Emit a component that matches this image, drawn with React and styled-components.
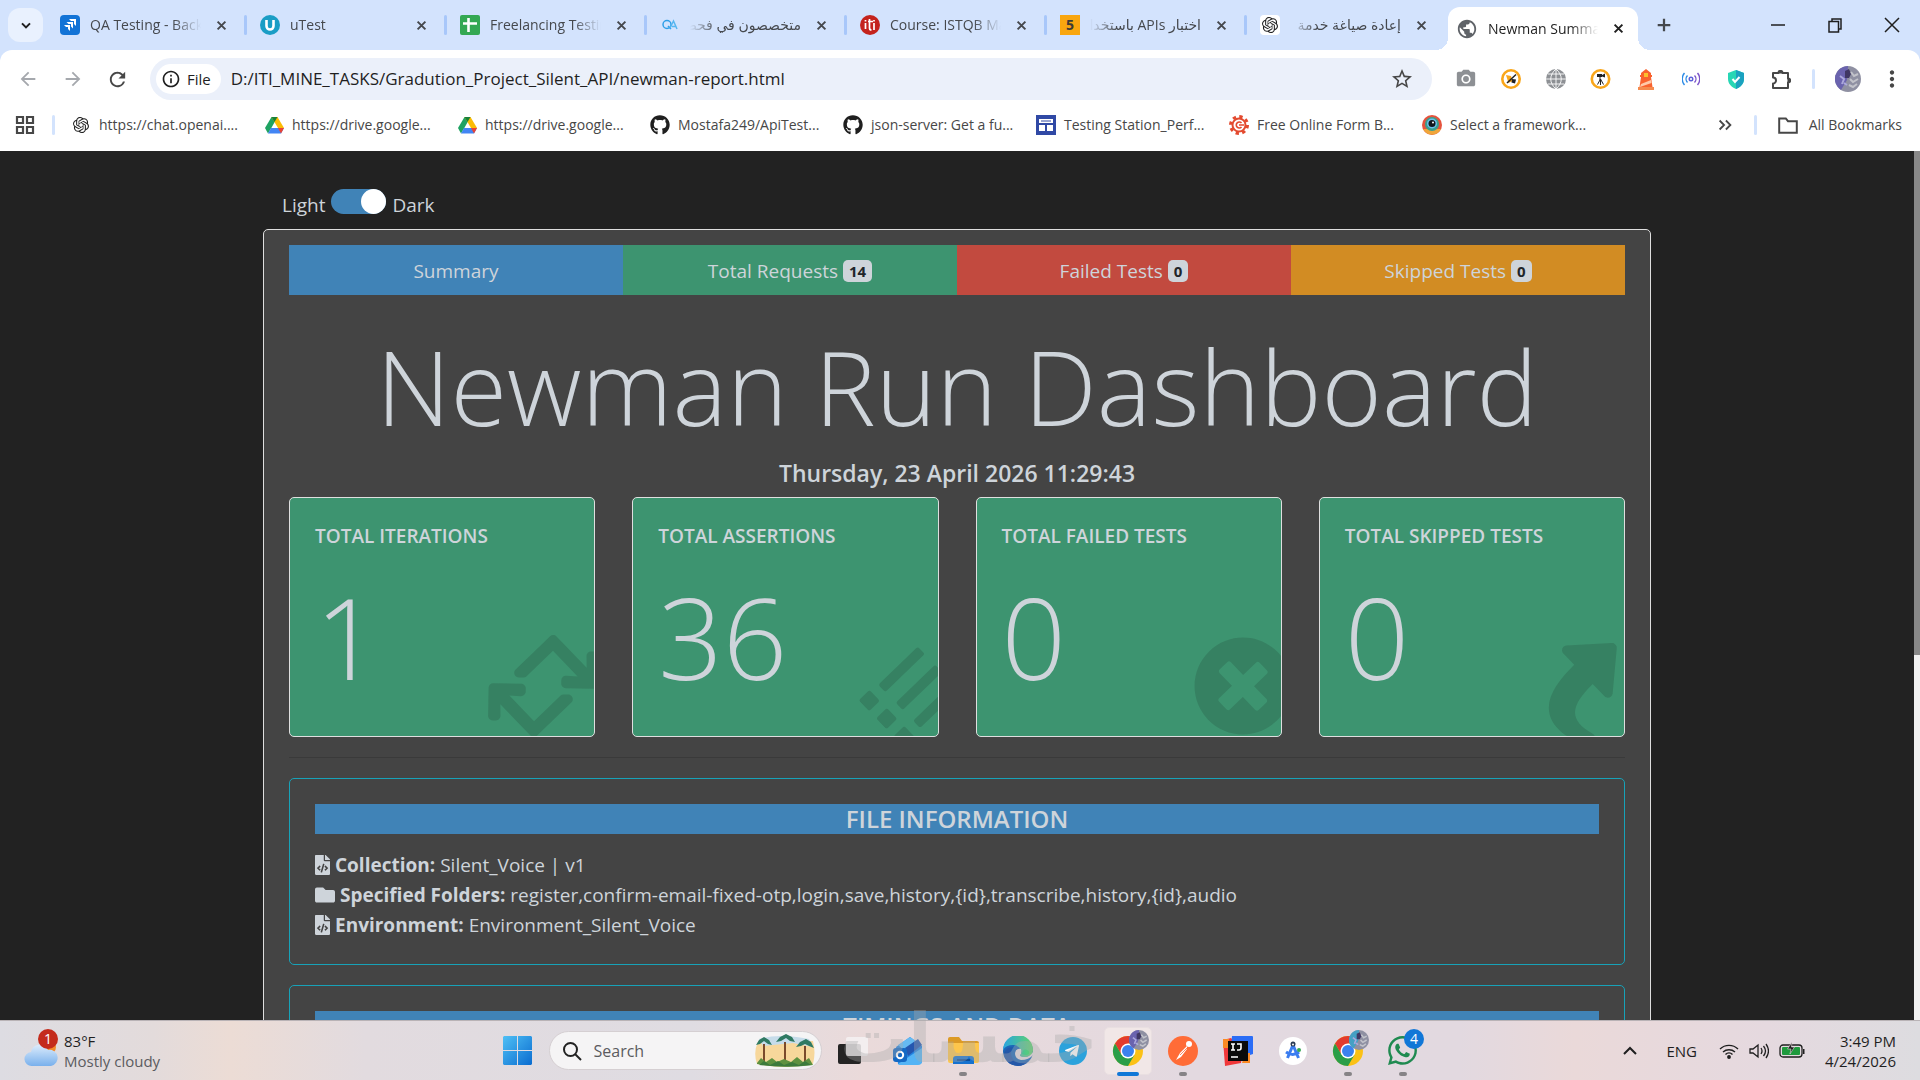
import React, { useState } from "react";
import styled, { createGlobalStyle } from "styled-components";
import {
  FaFileCode,
  FaFolder,
  FaGithub,
  FaList,
  FaPlusCircle,
  FaRetweet,
  FaShare,
  FaTelegramPlane,
  FaWhatsapp,
} from "react-icons/fa";
import { SiOpenai } from "react-icons/si";
import {
  MdArrowBack,
  MdArrowForward,
  MdCameraAlt,
  MdMoreVert,
  MdOutlineInfo,
  MdPublic,
  MdRefresh,
  MdStarBorder,
} from "react-icons/md";

const GlobalStyle = createGlobalStyle`
  * {
    box-sizing: border-box;
  }

  body {
    margin: 0;
    font-family: "Open Sans", "DejaVu Sans", sans-serif;
  }

  button {
    display: flex;
    align-items: center;
    justify-content: center;
    padding: 0;
    border: 0;
    background: none;
    color: inherit;
    font: inherit;
  }

  a {
    color: inherit;
    text-decoration: none;
  }

  svg {
    display: block;
    flex: none;
  }
`;

const Screen = styled.div`
  position: relative;
  display: flex;
  flex-direction: column;
  height: 100vh;
  overflow: hidden;
`;

/* ---------- browser ---------- */

const TabStrip = styled.div`
  display: flex;
  align-items: flex-end;
  height: 50px;
  flex: none;
  padding-left: 8px;
  background: #d3e3fd;
  color: #45484d;
`;

const TabSearch = styled.button`
  width: 35px;
  height: 34px;
  align-self: center;
  margin-right: 3px;
  border-radius: 12px;
  background: #e9f1fe;
  color: #1f1f1f;
`;

const Tab = styled.div`
  position: relative;
  display: flex;
  align-items: center;
  flex: 0 1 ${(props) => (props.$active ? "190px" : "200px")};
  min-width: 0;
  height: ${(props) => (props.$active ? "43px" : "50px")};
  margin: ${(props) => (props.$active ? "0 2px" : "0")};
  padding: ${(props) => (props.$active ? "0 13px 0 8px" : "0 18px 0 14px")};
  border-radius: 12px 12px 0 0;
  background: ${(props) => (props.$active ? "#fff" : "none")};
  color: ${(props) => (props.$active ? "#1f1f1f" : "#45484d")};

  &::before,
  &::after {
    content: "";
    display: ${(props) => (props.$active ? "block" : "none")};
    position: absolute;
    bottom: 0;
    width: 12px;
    height: 12px;
  }

  &::before {
    right: 100%;
    background: radial-gradient(circle at 0 0, transparent 12px, #fff 12px);
  }

  &::after {
    left: 100%;
    background: radial-gradient(circle at 100% 0, transparent 12px, #fff 12px);
  }
`;

const TabDivider = styled.span`
  width: 3px;
  height: 20px;
  margin: 0 -1px 15px -2px;
  border-radius: 2px;
  background: #a8c7fa;
`;

const TabTitle = styled.span`
  flex: 1;
  min-width: 0;
  margin: 0 14px 0 10px;
  overflow: hidden;
  white-space: nowrap;
  font-size: 14px;
  line-height: 24px;
  mask-image: linear-gradient(
    to ${(props) => (props.dir === "rtl" ? "left" : "right")},
    #000 75%,
    transparent
  );
`;

const NewTab = styled.button`
  width: 34px;
  height: 50px;
  margin-left: 7px;
`;

const WindowButtons = styled.div`
  display: flex;
  margin-left: auto;
  color: #1f1f1f;

  button {
    width: 57px;
    height: 50px;
  }
`;

const ToolbarArea = styled.div`
  flex: none;
  background: #d3e3fd;
`;

const Toolbar = styled.div`
  display: flex;
  align-items: center;
  padding: 8px 13px 0 5px;
  border-radius: 12px 12px 0 0;
  background: #fff;
  color: #474747;
`;

const ToolButton = styled.button`
  width: ${(props) => props.$width || 45}px;
  height: 40px;
  color: ${(props) => (props.$dim ? "#a5a8ad" : "inherit")};
`;

const Omnibox = styled.div`
  display: flex;
  align-items: center;
  flex: 1;
  height: 42px;
  margin: 0 11px 0 10px;
  padding: 0 18px 0 6px;
  border-radius: 21px;
  background: #ebf0fa;
`;

const FileChip = styled.button`
  gap: 6px;
  height: 30px;
  padding: 0 10px 0 5px;
  border-radius: 15px;
  background: #fff;
  color: #1f1f1f;
  font-size: 15px;
  font-weight: 500;
`;

const Address = styled.input`
  flex: 1;
  min-width: 0;
  margin-left: 10px;
  padding: 0;
  border: 0;
  outline: 0;
  background: none;
  color: #1f1f1f;
  font: 17px/24px "Open Sans", sans-serif;
`;

const Divider = styled.span`
  width: 3px;
  height: 20px;
  margin-left: ${(props) => props.$space || 0}px;
  border-radius: 2px;
  background: #d3e3fd;
`;

const Profile = styled.button`
  margin: 0 16px 0 20px;
`;

const Bookmarks = styled.nav`
  display: flex;
  align-items: center;
  height: 51px;
  padding: 0 18px 2px 12px;
  background: #fff;
  color: #474747;
  font-size: 14px;
  line-height: 22px;
`;

const BookmarkList = styled.div`
  display: flex;
  flex: 1;
  min-width: 0;
  margin-left: 16px;
  overflow: hidden;
`;

const Bookmark = styled.a`
  display: grid;
  grid-template-columns: 20px 1fr;
  align-items: center;
  gap: 8px;
  flex: 0 1 193px;
  min-width: 0;
  white-space: nowrap;

  svg {
    justify-self: center;
  }
`;

const AllBookmarks = styled.button`
  gap: 10px;
  margin-left: 20px;
`;

const Chevrons = styled.button`
  width: 24px;
  height: 24px;
  margin-right: 17px;
`;

/* ---------- report page ---------- */

const Viewport = styled.div`
  display: flex;
  flex: 1;
  min-height: 0;
  overflow: hidden;
  background: #222;
`;

const Page = styled.main`
  flex: 1;
  min-width: 0;
  padding-top: 37px;
  overflow: hidden;
  color: #ced4da;
  font-size: 19px;
  line-height: 30px;
`;

const ScrollTrack = styled.div`
  width: 6px;
  background: #f1f1f1;
`;

const ScrollThumb = styled.div`
  height: 58%;
  background: #888;
`;

const Container = styled.div`
  max-width: 1388px;
  margin: 0 auto;
`;

const ThemeSwitch = styled.label`
  display: flex;
  align-items: center;
  gap: 6px;
  height: 34px;
  margin-bottom: 7px;
  padding-left: 19px;
`;

const Switch = styled.input`
  appearance: none;
  display: flex;
  justify-content: ${(props) => (props.checked ? "flex-end" : "flex-start")};
  align-self: flex-start;
  width: 55px;
  height: 25px;
  margin: 1px 0 0;
  border-radius: 13px;
  background: #4083b7;

  &::before {
    content: "";
    width: 25px;
    height: 25px;
    border-radius: 50%;
    background: #fff;
  }
`;

const Report = styled.section`
  padding: 15px 25px;
  border: 1px solid #dfdfdf;
  border-radius: 5px;
  background: #444;
`;

const Pills = styled.nav`
  display: grid;
  grid-template-columns: repeat(4, 1fr);
`;

const Pill = styled.a`
  display: flex;
  align-items: center;
  justify-content: center;
  gap: 5px;
  height: 50px;
  padding-top: 2px;
  background: ${(props) => props.$color};
`;

const Badge = styled.span`
  padding: 0 6px;
  border-radius: 5px;
  background: #ced4da;
  color: #212529;
  font-size: 15px;
  font-weight: 700;
  line-height: 22px;
`;

const Title = styled.h1`
  margin: 25px 0 6px;
  font-size: 103px;
  font-weight: 300;
  line-height: 132px;
  text-align: center;
`;

const RunDate = styled.h5`
  margin: 0 0 9px;
  font-size: 23px;
  font-weight: 600;
  line-height: 30px;
  text-align: center;
`;

const Stats = styled.div`
  display: grid;
  grid-template-columns: repeat(4, 1fr);
  gap: 37px;
`;

const Stat = styled.article`
  position: relative;
  padding: 26px 25px 28px;
  border: 1px solid #dfdfdf;
  border-radius: 5px;
  background: #3d9470;
  overflow: hidden;
`;

const StatName = styled.h6`
  margin: 0 0 16px;
  font-size: 19px;
  font-weight: 600;
  line-height: 24px;
  text-transform: uppercase;
`;

const StatValue = styled.div`
  font-size: 113px;
  font-weight: 300;
  line-height: 144px;
`;

const StatIcon = styled.span`
  position: absolute;
  right: -12px;
  bottom: 0;
  color: rgba(20, 20, 20, 0.15);
  transform: rotate(-44deg);

  svg {
    width: ${(props) => props.$width}px;
    height: ${(props) => props.$height}px;
  }
`;

const Rule = styled.hr`
  margin: 20px 0;
  border: 0;
  border-top: 1px solid #3a3a3a;
`;

const Panel = styled.section`
  margin-bottom: 20px;
  padding: 25px 25px 24px;
  border: 1px solid #17a2b8;
  border-radius: 5px;
`;

const PanelTitle = styled.h5`
  margin: 0 0 16px;
  background: #4083b7;
  font-size: 24px;
  font-weight: 600;
  line-height: 30px;
  text-align: center;
  text-transform: uppercase;
`;

const Fact = styled.div`
  display: flex;
  align-items: center;
  gap: 5px;

  svg {
    width: ${(props) => props.$iconWidth}px;
    height: 20px;
  }
`;

/* ---------- taskbar ---------- */

const Taskbar = styled.footer`
  display: grid;
  grid-template-columns: 1fr auto 1fr;
  align-items: center;
  flex: none;
  height: 60px;
  border-top: 1px solid #b9b3b6;
  background: linear-gradient(
    90deg,
    #dddce2 0%,
    #e3dbdb 8%,
    #ecdcd5 12%,
    #e2dbdf 19%,
    #dfdce2 36%,
    #eadada 45%,
    #e3d9e0 62%,
    #e2d9e0 76%,
    #ead9d9 82%,
    #e5d9df 92%,
    #dddce0 100%
  );
  color: #1f1f1f;
  font-size: 15px;
  line-height: 20px;
`;

const Weather = styled.button`
  gap: 6px;
  justify-self: start;
  padding-left: 24px;
  text-align: left;
`;

const Muted = styled.div`
  color: #5b5b60;
`;

const Apps = styled.div`
  display: flex;
  align-items: center;
`;

const AppButton = styled.button`
  position: relative;
  width: 55px;
  height: 58px;

  &::after {
    content: "";
    display: ${(props) => (props.$state ? "block" : "none")};
    position: absolute;
    bottom: 4px;
    width: ${(props) => (props.$state === "active" ? 22 : 8)}px;
    height: 4px;
    border-radius: 2px;
    background: ${(props) => (props.$state === "active" ? "#1177d7" : "#868386")};
  }
`;

const ActiveFrame = styled.span`
  display: flex;
  align-items: center;
  justify-content: center;
  width: 48px;
  height: 48px;
  border: 1px solid #e9dfe1;
  border-radius: 5px;
  background: #f1e7e7;
`;

const SearchBox = styled.label`
  display: flex;
  align-items: center;
  width: 273px;
  height: 39px;
  margin: 0 4px;
  padding: 0 6px 0 12px;
  border: 1px solid #d5cfd2;
  border-radius: 20px;
  background: #f5f4f5;

  input {
    flex: 1;
    min-width: 0;
    margin-left: 12px;
    padding: 0;
    border: 0;
    outline: 0;
    background: none;
    font: 16px/24px "Open Sans", sans-serif;
  }

  input::placeholder {
    color: #5b5b5f;
  }
`;

const Tray = styled.div`
  display: flex;
  align-items: center;
  justify-self: end;
  gap: 10px;
  padding-right: 24px;
`;

const Language = styled.button`
  margin: 0 12px 0 16px;
`;

const Clock = styled.button`
  margin-left: 10px;
  text-align: right;
`;

const Watermark = styled.div`
  position: absolute;
  left: 50%;
  bottom: -6px;
  width: 240px;
  margin-left: -120px;
  color: rgba(170, 170, 170, 0.36);
  font: bold 68px/94px "DejaVu Sans", sans-serif;
  text-align: center;
  pointer-events: none;
`;

/* ---------- drawings ---------- */

const JiraIcon = () => (
  <svg width="20" height="20" viewBox="0 0 20 20">
    <rect width="20" height="20" rx="4" fill="#1273d6" />
    <path d="M9 4h7v7l-2-2V6h-3zM6.500 7h6.500v6.500l-2-2V9H8.500zM4 10h6v6l-2-2v-2H6z" fill="#fff" />
  </svg>
);

const UTestIcon = () => (
  <svg width="20" height="20" viewBox="0 0 20 20">
    <circle cx="10" cy="10" r="10" fill="#1a9dc5" />
    <path d="M6.500 5v6a3.500 3.500 0 0 0 7 0V5" fill="none" stroke="#fff" strokeWidth="2.600" />
  </svg>
);

const SheetsIcon = () => (
  <svg width="20" height="20" viewBox="0 0 20 20">
    <rect width="20" height="20" rx="2" fill="#34a853" />
    <path d="M3 8.500h14M8.500 3v14" stroke="#fff" strokeWidth="2.600" />
  </svg>
);

const QaIcon = () => (
  <svg width="20" height="20" viewBox="0 0 20 20" fill="none" strokeWidth="1.500">
    <circle cx="7" cy="9.500" r="4" stroke="#2f9fe8" />
    <path d="M8 11l3 3" stroke="#2f9fe8" />
    <path d="M10 13l3.500-7 3.500 8M12 11.500h4" stroke="#56b6f0" />
  </svg>
);

const ItiIcon = () => (
  <svg width="20" height="20" viewBox="0 0 20 20">
    <circle cx="10" cy="10" r="10" fill="#c4231d" />
    <path
      d="M5.500 8v6M5.500 5v1.500M8 6.500h5M9.500 4v9q0 2 2 2M14 8v7M14 5v1.500"
      fill="none"
      stroke="#fff"
      strokeWidth="1.700"
    />
  </svg>
);

const FiveIcon = () => (
  <svg width="20" height="20" viewBox="0 0 20 20">
    <rect width="20" height="20" fill="#f9a60f" />
    <text x="10" y="15" textAnchor="middle" fontSize="14" fontWeight="700" fill="#3b3a36">
      5
    </text>
  </svg>
);

const GptIcon = () => (
  <svg width="20" height="20" viewBox="0 0 20 20">
    <rect width="20" height="20" rx="4" fill="#fff" />
    <SiOpenai x="2" y="2" size="16" color="#222" />
  </svg>
);

const DriveIcon = () => (
  <svg width="19" height="18" viewBox="0 0 19 18">
    <path d="M6.500 1h6L6 12.500l-3 5L0 12z" fill="#1ea362" />
    <path d="M6.500 1h6l6.500 11h-6z" fill="#fbbc04" />
    <path d="M6.500 1h6l-3 5z" fill="#188038" />
    <path d="M3 17.500L6 12h13l-3 5.500z" fill="#4285f4" />
    <path d="M13 12h6l-3 5.500z" fill="#ea4335" />
  </svg>
);

const StationIcon = () => (
  <svg width="20" height="20" viewBox="0 0 20 20">
    <rect width="20" height="20" fill="#3049a5" />
    <path d="M3 4h14v4H3zM3 10h6v6H3zM11 10h6v6h-6z" fill="#fff" />
    <path d="M5 5.500h10v1H5z" fill="#3049a5" />
  </svg>
);

const FormIcon = () => (
  <svg width="20" height="20" viewBox="0 0 20 20" fill="none">
    <circle cx="10" cy="10" r="8.500" stroke="#e34a2f" strokeWidth="3" strokeDasharray="3.340 3.340" />
    <circle cx="10" cy="10" r="6.500" stroke="#e34a2f" strokeWidth="2" />
    <path d="M12.500 8a3 3 0 1 0 0 4M10 10h5" stroke="#e34a2f" strokeWidth="1.600" />
  </svg>
);

const EyeIcon = () => (
  <svg width="20" height="20" viewBox="0 0 20 20">
    <circle cx="10" cy="10" r="10" fill="#e5533d" />
    <path d="M1 14a10 10 0 0 0 18 0z" fill="#f0a63a" />
    <circle cx="10" cy="9" r="7" fill="#3a9e8d" />
    <circle cx="10" cy="8.500" r="5" fill="#6cc1ee" />
    <circle cx="10" cy="8.500" r="3.500" fill="#11161d" />
    <circle cx="11" cy="7.500" r="1" fill="#fff" />
  </svg>
);

const CursorBadge = () => (
  <svg width="20" height="20" viewBox="0 0 20 20">
    <circle cx="10" cy="10" r="8.700" fill="#fff" stroke="#f9a61a" strokeWidth="2.600" />
    <path d="M5 6l5 1 1.500 5-4 2z" fill="#f9a61a" />
    <path d="M15 5.500L6 14" stroke="#222" strokeWidth="1.500" />
    <path d="M11 10l4 .500-1 4-3.500-1z" fill="#222" />
  </svg>
);

const CameraBadge = () => (
  <svg width="21" height="20" viewBox="0 0 21 20">
    <circle cx="10.500" cy="10" r="8.700" fill="#fff" stroke="#f9a61a" strokeWidth="2.600" />
    <path d="M7 5h5v3H7zM12 6l3-1.500v4L12 7.500z" fill="#222" />
    <path d="M10 8v3M10.500 10l-3 5.500M10.500 10v6M10.500 10l3 5.500" stroke="#222" />
  </svg>
);

const GridGlobe = () => (
  <svg width="20" height="20" viewBox="0 0 20 20">
    <circle cx="10" cy="10" r="10" fill="#8d9094" />
    <path
      d="M0 10h20M2 5h16M2 15h16M10 0v20M10 0c-7 6-7 14 0 20M10 0c7 6 7 14 0 20"
      fill="none"
      stroke="#fff"
      strokeWidth=".900"
    />
  </svg>
);

const Lighthouse = () => (
  <svg width="18" height="21" viewBox="0 0 18 21">
    <path d="M9 0l5 4v2h1v2h-1l1.500 10h-13L4 8H3V6h1V4z" fill="#f9622e" />
    <path d="M7 4h4v4H7z" fill="#fbc02d" />
    <path d="M4 15l10-4 .500 3L3 18z" fill="#ffc9a8" />
    <path d="M1 18h16v3H1z" fill="#f58b4e" />
  </svg>
);

const SignalIcon = () => (
  <svg width="18" height="18" viewBox="0 0 18 18" fill="none" strokeWidth="1.400">
    <circle cx="9" cy="9" r="1.800" stroke="#5b5fd8" />
    <path d="M5.500 5.500a5 5 0 0 0 0 7M2.500 3a9 9 0 0 0 0 12" stroke="#2b8be6" />
    <path d="M12.500 5.500a5 5 0 0 1 0 7M15.500 3a9 9 0 0 1 0 12" stroke="#7a52c9" />
  </svg>
);

const ShieldIcon = () => (
  <svg width="16" height="19" viewBox="0 0 16 19">
    <path d="M8 0l8 3v6c0 5-4 8.500-8 10-4-1.500-8-5-8-10V3z" fill="#27d6b5" />
    <path d="M8 0l8 3v6c0 5-4 8.500-8 10z" fill="#1ba1c0" />
    <path d="M4.500 9l2.500 3 4.500-5" fill="none" stroke="#fff" strokeWidth="2" />
  </svg>
);

const PuzzleIcon = () => (
  <svg width="22" height="22" viewBox="0 0 22 22" fill="none" stroke="#474747" strokeWidth="2">
    <path
      d="M3 5h5.500a2 2 0 0 1 4 0H18v5.500a2 2 0 0 1 0 4V20H3v-4.500a3 3 0 0 0 0-6z"
      strokeLinejoin="round"
    />
    <path d="M9 4.500a1.500 1.500 0 0 1 3 0zM18.500 11a1.500 1.500 0 0 1 0 3z" fill="#474747" />
  </svg>
);

const Avatar = ({ size, tone = "#6a63ae" }) => (
  <svg width={size} height={size} viewBox="0 0 26 26">
    <circle cx="13" cy="13" r="13" fill="#8f90a2" />
    <path d="M13 0a13 13 0 0 0-7 24l6-10z" fill={tone} />
    <path d="M10 5l4-2 2 5-2 4h-4z" fill="#3f3763" />
    <path d="M16 6l3 4 4-2M15 13l3 3 5-3M14 19l4 2 4-3" stroke="#c2c3ca" strokeWidth="2" fill="none" />
    <path d="M5 10l4 3-2 5M9 17l3 2" stroke="#aba8dc" strokeWidth="2" fill="none" />
  </svg>
);

const WeatherIcon = () => (
  <svg width="34" height="46" viewBox="0 0 34 46">
    <defs>
      <linearGradient id="cloud" x1="0" y1="0" x2="0" y2="1">
        <stop offset="0" stopColor="#dcecfc" />
        <stop offset="1" stopColor="#79b0ec" />
      </linearGradient>
    </defs>
    <circle cx="25" cy="19" r="7" fill="#f38b2b" />
    <path
      d="M8 38a7 7 0 0 1-1-14 9 9 0 0 1 17-2 8 8 0 0 1 3 16z"
      fill="url(#cloud)"
    />
    <circle cx="24" cy="11" r="10" fill="#c42b1c" />
    <text x="24" y="16" textAnchor="middle" fontSize="14" fill="#fff">
      1
    </text>
  </svg>
);

const WindowsIcon = () => (
  <svg width="29" height="29" viewBox="0 0 29 29">
    <defs>
      <linearGradient id="win" x1="0" y1="0" x2="1" y2="1">
        <stop offset="0" stopColor="#4fc0f5" />
        <stop offset="1" stopColor="#0a6cd0" />
      </linearGradient>
    </defs>
    <path d="M0 1l1-1h13v14H0zM15 0h13l1 1v13H15zM0 15h14v14H1l-1-1zM15 15h14v13l-1 1H15z" fill="url(#win)" />
  </svg>
);

const SavannaArt = () => (
  <svg width="60" height="33" viewBox="0 0 60 33">
    <path d="M3 8q10-7 24-4t31 3q3 12 0 23-28 6-56 0-4-12 1-22z" fill="#f7d79b" />
    <path d="M4 5q20-6 50 0l4 8-20-4-30 3z" fill="#c6dcea" />
    <path d="M9 10v18M30 8v20M50 12v16" stroke="#7a4a2c" strokeWidth="2" />
    <path d="M1 11l3-5 5-3 5 3 3 5-4-1-4-3-4 3zM21 8l4-5 6-3 6 3 3 5-5-1-4-3-5 3zM41 13l4-5 6-3 5 3 3 6-5-2-4-2-4 2z" fill="#2f7a63" />
    <path d="M2 29l4-5 5 4 6-4 5 4 7-3 7 3 6-5 6 5 6-4 4 7q-28 4-56-1z" fill="#5d9140" />
    <path d="M4 31l5-4 6 4 8-4 6 4 8-3 7 3 6-4 6 4q-26 3-52 0z" fill="#3b7a3c" />
  </svg>
);

const TaskViewIcon = () => (
  <svg width="30" height="28" viewBox="0 0 30 28">
    <rect y="7" width="23" height="20" rx="2" fill="#242424" />
    <rect x="8" width="22" height="19" rx="2" fill="#f4f1f2" opacity=".85" />
  </svg>
);

const OutlookIcon = () => (
  <svg width="30" height="30" viewBox="0 0 30 30">
    <path d="M3 11L17 1l12 9v15q0 3-3 3H5z" fill="#2384e0" />
    <path d="M5 9L17 1l12 8-14 9z" fill="#66baf2" />
    <path d="M12 12L25 3l4 6-14 11z" fill="#2457b0" />
    <path d="M5 28l24-16v13q0 4-4 4H6z" fill="#54b4f5" />
    <rect y="12" width="14" height="14" rx="3" fill="#1469c4" />
    <circle cx="7" cy="19" r="3.200" fill="none" stroke="#fff" strokeWidth="2" />
  </svg>
);

const ExplorerIcon = () => (
  <svg width="31" height="27" viewBox="0 0 31 27">
    <path d="M0 2q0-2 2-2h9l3 4h15q2 0 2 2v8H0z" fill="#dc9a25" />
    <path d="M0 6h31v18q0 2-2 2H2q-2 0-2-2z" fill="#fdc64c" />
    <path d="M5 27v-5q0-3 3-3h15q3 0 3 3v5z" fill="#1672cf" />
    <path d="M9 22h13v2H9z" fill="#0b4d99" />
  </svg>
);

const EdgeIcon = () => (
  <svg width="30" height="30" viewBox="0 0 30 30">
    <defs>
      <linearGradient id="edge" x1="0" y1="0" x2="1" y2="0">
        <stop offset="0" stopColor="#2aa5e0" />
        <stop offset="1" stopColor="#5fd36a" />
      </linearGradient>
    </defs>
    <circle cx="15" cy="15" r="15" fill="#1a66b8" />
    <path d="M0 14a15 15 0 0 1 30 0q0 7-8 7-5 0-5-2 2-2 1-5-2-5-8-5-7 0-10 5z" fill="url(#edge)" />
    <path d="M10 11q-5 8 2 14 6 4 14-1-5 6-11 6Q2 29 1 17q2-6 9-6z" fill="#2457a8" />
    <path d="M18 13q-5-1-6 4 0 6 6 7 8 0 12-5v-3q-3 5-8 5-5 0-5-2 2-2 1-6z" fill="#e5dade" />
  </svg>
);

const TelegramIcon = () => (
  <svg width="28" height="28" viewBox="0 0 28 28">
    <circle cx="14" cy="14" r="14" fill="#2ba2dc" />
    <FaTelegramPlane x="5" y="6" size="16" color="#fff" />
  </svg>
);

const ChromeIcon = ({ tone }) => (
  <svg width="30" height="30" viewBox="0 6 30 30" overflow="visible">
    <circle cx="15" cy="21" r="15" fill="#fbc116" />
    <path d="M2 13.500A15 15 0 0 1 28 13.500H15l-6.500 11.300z" fill="#e33b2e" />
    <path d="M2 13.500A15 15 0 0 0 15 36l6.500-11.300H8.500z" fill="#2a9e48" />
    <circle cx="15" cy="21" r="7.500" fill="#fff" />
    <circle cx="15" cy="21" r="6" fill="#3b82ee" />
    <svg x="16">
      <Avatar size="20" tone={tone} />
    </svg>
  </svg>
);

const PostmanIcon = () => (
  <svg width="30" height="30" viewBox="0 0 30 30">
    <circle cx="15" cy="15" r="15" fill="#ff6c37" />
    <circle cx="21" cy="8" r="3" fill="#fff" />
    <path d="M19 10l-7 7-4 7 5-3 6-8z" fill="#fff" />
    <path d="M20 11l-8 8" stroke="#ff6c37" strokeWidth=".800" />
  </svg>
);

const IntellijIcon = () => (
  <svg width="30" height="30" viewBox="0 0 30 30">
    <path d="M0 4l8-2 12 12-2 13-16 3z" fill="#f0383a" />
    <path d="M0 3h6v9H0z" fill="#fb8a24" />
    <path d="M9 0h20q1 0 1 1v17l-9 3L8 12z" fill="#2b6df6" />
    <path d="M22 17h5v10h-8z" fill="#fb8a24" />
    <rect x="5" y="5" width="20" height="20" fill="#0a0a0a" />
    <path d="M8 8h4M10 8v6M8 14h4M14 8h4v4q0 2-2 2h-2M8 21h7" fill="none" stroke="#fff" strokeWidth="1.600" />
  </svg>
);

const StudioIcon = () => (
  <svg width="28" height="28" viewBox="0 0 28 28">
    <circle cx="14" cy="14" r="14" fill="#fff" />
    <path d="M14 8L8.500 21M14 8l5.500 13M7 15q7 5 13 0" fill="none" stroke="#3b7df0" strokeWidth="3" />
    <circle cx="14" cy="7" r="2.500" fill="#2b3b55" />
    <circle cx="14" cy="7.500" r="1" fill="#fff" />
    <circle cx="20" cy="13" r="2" fill="#34a853" />
  </svg>
);

const WhatsappIcon = () => (
  <svg width="30" height="30" viewBox="0 6 30 30" overflow="visible">
    <FaWhatsapp x="-2" y="4" size="33" color="#1f8a50" />
    <circle cx="26" cy="9" r="10" fill="#1177d7" />
    <text x="26" y="14" textAnchor="middle" fontSize="14" fill="#fff">
      4
    </text>
  </svg>
);

const Line = ({ d, size = 20, width = 1.5 }) => (
  <svg width={size} height={size} viewBox="0 0 20 20" fill="none" stroke="currentColor" strokeWidth={width}>
    <path d={d} />
  </svg>
);

const WifiIcon = () => (
  <svg width="20" height="20" viewBox="0 0 20 20" fill="none" stroke="currentColor" strokeWidth="1.400">
    <path d="M1 8a13 13 0 0 1 18 0M4 11a9 9 0 0 1 12 0M6.500 13.500a5 5 0 0 1 7 0" />
    <circle cx="10" cy="16" r="1.200" fill="currentColor" />
  </svg>
);

const BatteryIcon = () => (
  <svg width="26" height="20" viewBox="0 0 26 20">
    <rect x="1" y="4" width="22" height="12" rx="3" fill="none" stroke="#1f1f1f" strokeWidth="1.300" />
    <path d="M24 8v5h1.500V8z" fill="#1f1f1f" />
    <rect x="3" y="6" width="18" height="8" rx="1" fill="#1f9a3d" />
    <path d="M13 1L8.500 8H12l-1 5 4.500-7H12.500z" fill="#1f1f1f" stroke="#e6dadd" strokeWidth=".600" />
  </svg>
);

/* ---------- data ---------- */

const tabs = [
  { title: "QA Testing - Backlog", icon: <JiraIcon /> },
  { title: "uTest", icon: <UTestIcon /> },
  { title: "Freelancing Testing", icon: <SheetsIcon /> },
  { title: "متخصصون في فحص", icon: <QaIcon />, rtl: true },
  { title: "Course: ISTQB Man", icon: <ItiIcon /> },
  { title: "اختبار APIs باستخدام", icon: <FiveIcon />, rtl: true },
  { title: "إعادة صياغة خدمة", icon: <GptIcon />, rtl: true },
  { title: "Newman Summary", icon: <MdPublic size="22" color="#5f6368" />, active: true },
];

const extensions = [
  ["Screenshot", <MdCameraAlt size="22" color="#8d9094" />],
  ["Selector", <CursorBadge />],
  ["Web", <GridGlobe />],
  ["Recorder", <CameraBadge />],
  ["Lighthouse", <Lighthouse />],
  ["Signal", <SignalIcon />],
  ["Shield", <ShieldIcon />],
  ["Extensions", <PuzzleIcon />],
];

const bookmarks = [
  ["https://chat.openai....", <SiOpenai size="16" color="#222" />],
  ["https://drive.google...", <DriveIcon />],
  ["https://drive.google...", <DriveIcon />],
  ["Mostafa249/ApiTest...", <FaGithub size="20" color="#1f1f1f" />],
  ["json-server: Get a fu...", <FaGithub size="20" color="#1f1f1f" />],
  ["Testing Station_Perf...", <StationIcon />],
  ["Free Online Form B...", <FormIcon />],
  ["Select a framework...", <EyeIcon />],
];

const pills = [
  { name: "Summary", color: "#4083b7" },
  { name: "Total Requests", color: "#3d9470", count: 14 },
  { name: "Failed Tests", color: "#c24a3f", count: 0 },
  { name: "Skipped Tests", color: "#d28c23", count: 0 },
];

const stats = [
  { name: "Total Iterations", value: 1, icon: <FaRetweet />, size: [125, 100] },
  { name: "Total Assertions", value: 36, icon: <FaList />, size: [80, 80] },
  { name: "Total Failed Tests", value: 0, icon: <FaPlusCircle />, size: [100, 100] },
  { name: "Total Skipped Tests", value: 0, icon: <FaShare />, size: [100, 100] },
];

const facts = [
  { name: "Collection:", value: "Silent_Voice | v1", icon: <FaFileCode />, iconWidth: 15 },
  {
    name: "Specified Folders:",
    value: "register,confirm-email-fixed-otp,login,save,history,{id},transcribe,history,{id},audio",
    icon: <FaFolder />,
    iconWidth: 20,
  },
  { name: "Environment:", value: "Environment_Silent_Voice", icon: <FaFileCode />, iconWidth: 15 },
];

const apps = [
  { name: "Task view", icon: <TaskViewIcon /> },
  { name: "Outlook", icon: <OutlookIcon /> },
  { name: "File Explorer", icon: <ExplorerIcon />, state: "open" },
  { name: "Edge", icon: <EdgeIcon /> },
  { name: "Telegram", icon: <TelegramIcon /> },
  { name: "Chrome", icon: <ChromeIcon />, state: "active" },
  { name: "Postman", icon: <PostmanIcon />, state: "open" },
  { name: "IntelliJ IDEA", icon: <IntellijIcon /> },
  { name: "Android Studio", icon: <StudioIcon /> },
  { name: "Chrome, second profile", icon: <ChromeIcon tone="#45a0c4" />, state: "open" },
  { name: "WhatsApp", icon: <WhatsappIcon />, state: "open" },
];

const Browser = () => (
  <>
    <TabStrip>
      <TabSearch aria-label="Search tabs">
        <Line d="M5 8l5 5 5-5" width={2.5} size={16} />
      </TabSearch>
      {tabs.map((tab, i) => (
        <React.Fragment key={tab.title}>
          <Tab $active={tab.active}>
            {tab.icon}
            <TabTitle dir={tab.rtl ? "rtl" : "ltr"}>{tab.title}</TabTitle>
            <button aria-label="Close tab">
              <Line d="M4 4l12 12M16 4L4 16" width={3} size={13} />
            </button>
          </Tab>
          {i < 6 && <TabDivider />}
        </React.Fragment>
      ))}
      <NewTab aria-label="New tab">
        <Line d="M10 3v14M3 10h14" width={2.5} size={18} />
      </NewTab>
      <WindowButtons>
        <button aria-label="Minimize">
          <Line d="M3 10h14" width={1.5} />
        </button>
        <button aria-label="Restore">
          <Line d="M4 6.500h9.500V17H4zM7 6V4h9v10h-2" width={1.5} />
        </button>
        <button aria-label="Close">
          <Line d="M3 3l14 14M17 3L3 17" width={1.5} />
        </button>
      </WindowButtons>
    </TabStrip>
    <ToolbarArea>
      <Toolbar>
        <ToolButton $dim aria-label="Back">
          <MdArrowBack size="22" />
        </ToolButton>
        <ToolButton $dim aria-label="Forward">
          <MdArrowForward size="22" />
        </ToolButton>
        <ToolButton aria-label="Reload">
          <MdRefresh size="23" />
        </ToolButton>
        <Omnibox>
          <FileChip>
            <MdOutlineInfo size="20" />
            File
          </FileChip>
          <Address
            aria-label="Address"
            defaultValue="D:/ITI_MINE_TASKS/Gradution_Project_Silent_API/newman-report.html"
          />
          <ToolButton $width={24} aria-label="Bookmark this page">
            <MdStarBorder size="24" />
          </ToolButton>
        </Omnibox>
        {extensions.map(([name, icon]) => (
          <ToolButton key={name} aria-label={name}>
            {icon}
          </ToolButton>
        ))}
        <Divider $space={9} />
        <Profile aria-label="Profile">
          <Avatar size="26" />
        </Profile>
        <ToolButton $width={30} aria-label="Menu">
          <MdMoreVert size="26" />
        </ToolButton>
      </Toolbar>
      <Bookmarks>
        <ToolButton $width={26} aria-label="Tab groups">
          <Line d="M2 2h6v6H2zM12 2h6v6h-6zM2 12h6v6H2zM12 12h6v6h-6z" width={2.2} />
        </ToolButton>
        <Divider $space={14} />
        <BookmarkList>
          {bookmarks.map(([name, icon], i) => (
            <Bookmark href="#" key={i}>
              {icon}
              {name}
            </Bookmark>
          ))}
        </BookmarkList>
        <Chevrons aria-label="More bookmarks">
          <Line d="M4 5l5 5-5 5M11 5l5 5-5 5" width={2} size={18} />
        </Chevrons>
        <Divider />
        <AllBookmarks>
          <Line d="M2 4h6l2 2.500h8V17H2z" width={1.8} size={22} />
          All Bookmarks
        </AllBookmarks>
      </Bookmarks>
    </ToolbarArea>
  </>
);

const Dashboard = () => {
  const [dark, setDark] = useState(true);

  return (
    <Viewport>
      <Page>
        <Container>
          <ThemeSwitch>
            Light
            <Switch type="checkbox" checked={dark} onChange={() => setDark(!dark)} />
            Dark
          </ThemeSwitch>
          <Report>
            <Pills>
              {pills.map((pill) => (
                <Pill href="#" key={pill.name} $color={pill.color}>
                  {pill.name}
                  {pill.count !== undefined && <Badge>{pill.count}</Badge>}
                </Pill>
              ))}
            </Pills>
            <Title>Newman Run Dashboard</Title>
            <RunDate>Thursday, 23 April 2026 11:29:43</RunDate>
            <Stats>
              {stats.map((stat) => (
                <Stat key={stat.name}>
                  <StatIcon $width={stat.size[0]} $height={stat.size[1]}>
                    {stat.icon}
                  </StatIcon>
                  <StatName>{stat.name}</StatName>
                  <StatValue>{stat.value}</StatValue>
                </Stat>
              ))}
            </Stats>
            <Rule />
            <Panel>
              <PanelTitle>File Information</PanelTitle>
              {facts.map((fact) => (
                <Fact key={fact.name} $iconWidth={fact.iconWidth}>
                  {fact.icon}
                  <strong>{fact.name}</strong>
                  <span>{fact.value}</span>
                </Fact>
              ))}
            </Panel>
            <Panel>
              <PanelTitle>Timings and Data</PanelTitle>
            </Panel>
          </Report>
        </Container>
      </Page>
      <ScrollTrack>
        <ScrollThumb />
      </ScrollTrack>
    </Viewport>
  );
};

const Desktop = () => (
  <Taskbar>
    <Weather>
      <WeatherIcon />
      <div>
        <div>83°F</div>
        <Muted>Mostly cloudy</Muted>
      </div>
    </Weather>
    <Apps>
      <AppButton aria-label="Start">
        <WindowsIcon />
      </AppButton>
      <SearchBox>
        <svg width="20" height="20" viewBox="0 0 20 20" fill="none" stroke="#222" strokeWidth="2">
          <circle cx="8.500" cy="8.500" r="6.500" />
          <path d="M13 13l6 6" />
        </svg>
        <input placeholder="Search" aria-label="Search" />
        <SavannaArt />
      </SearchBox>
      {apps.map((app) => (
        <AppButton key={app.name} aria-label={app.name} $state={app.state}>
          {app.state === "active" ? <ActiveFrame>{app.icon}</ActiveFrame> : app.icon}
        </AppButton>
      ))}
    </Apps>
    <Tray>
      <button aria-label="Hidden icons">
        <Line d="M4 13l6-6 6 6" width={2} />
      </button>
      <Language>ENG</Language>
      <WifiIcon />
      <Line d="M1 8h3l5-4v12l-5-4H1zM12 7q2 3 0 6M14.500 5q4 5 0 10M17 3q5 7 0 14" width={1.300} />
      <BatteryIcon />
      <Clock>
        <div>
          <div>3:49 PM</div>
          <div>4/24/2026</div>
        </div>
      </Clock>
    </Tray>
  </Taskbar>
);

const App = () => (
  <Screen>
    <GlobalStyle />
    <Browser />
    <Dashboard />
    <Desktop />
    <Watermark>خمسات</Watermark>
  </Screen>
);

export default App;
